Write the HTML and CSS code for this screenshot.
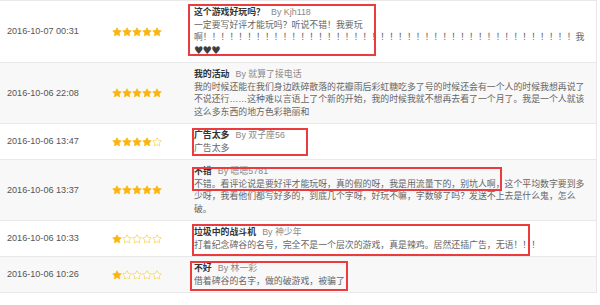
FILE: index.html
```html
<!DOCTYPE html>
<html lang="zh-CN">
<head>
<meta charset="utf-8">
<title>评论列表</title>
<link rel="stylesheet" href="styles.css">
</head>
<body>
<svg class="defs" width="0" height="0" aria-hidden="true">
  <defs>
    <path id="star" d="M12 1.5L15.29 7.97L22.46 9.1L17.33 14.23L18.47 21.4L12 18.1L5.53 21.4L6.67 14.23L1.54 9.1L8.71 7.97Z"/>
  </defs>
</svg>
<div class="list">
  <div class="row">
    <div class="date">2016-10-07 00:31</div>
    <div class="stars">
      <svg class="star on" viewBox="0 0 24 24"><use href="#star"/></svg><svg class="star on" viewBox="0 0 24 24"><use href="#star"/></svg><svg class="star on" viewBox="0 0 24 24"><use href="#star"/></svg><svg class="star on" viewBox="0 0 24 24"><use href="#star"/></svg><svg class="star on" viewBox="0 0 24 24"><use href="#star"/></svg>
    </div>
    <div class="body">
      <div class="head"><span class="title">这个游戏好玩吗？</span><span class="by">By Kjh118</span></div>
      <div class="text">一定要写好评才能玩吗？听说不错！我要玩啊！！！！！！！！！！！！！！！！！！！！！！！！！！！！！！！！！！！！！！！！！！我<span class="hearts">♥♥♥</span></div>
    </div>
  </div>
  <div class="row alt">
    <div class="date">2016-10-06 22:08</div>
    <div class="stars">
      <svg class="star on" viewBox="0 0 24 24"><use href="#star"/></svg><svg class="star on" viewBox="0 0 24 24"><use href="#star"/></svg><svg class="star on" viewBox="0 0 24 24"><use href="#star"/></svg><svg class="star on" viewBox="0 0 24 24"><use href="#star"/></svg><svg class="star on" viewBox="0 0 24 24"><use href="#star"/></svg>
    </div>
    <div class="body">
      <div class="head"><span class="title">我的活动</span><span class="by">By 就算了接电话</span></div>
      <div class="text">我的时候还能在我们身边跌碎散落的花瓣雨后彩虹糖吃多了号的时候还会有一个人的时候我想再说了不说还行……这种难以言语上了个新的开始，我的时候我就不想再去看了一个月了。我是一个人就该这么多东西的地方色彩艳丽和</div>
    </div>
  </div>
  <div class="row">
    <div class="date">2016-10-06 13:47</div>
    <div class="stars">
      <svg class="star on" viewBox="0 0 24 24"><use href="#star"/></svg><svg class="star on" viewBox="0 0 24 24"><use href="#star"/></svg><svg class="star on" viewBox="0 0 24 24"><use href="#star"/></svg><svg class="star on" viewBox="0 0 24 24"><use href="#star"/></svg><svg class="star off" viewBox="0 0 24 24"><use href="#star"/></svg>
    </div>
    <div class="body">
      <div class="head"><span class="title">广告太多</span><span class="by">By 双子座56</span></div>
      <div class="text">广告太多</div>
    </div>
  </div>
  <div class="row alt">
    <div class="date">2016-10-06 13:37</div>
    <div class="stars">
      <svg class="star on" viewBox="0 0 24 24"><use href="#star"/></svg><svg class="star on" viewBox="0 0 24 24"><use href="#star"/></svg><svg class="star on" viewBox="0 0 24 24"><use href="#star"/></svg><svg class="star on" viewBox="0 0 24 24"><use href="#star"/></svg><svg class="star on" viewBox="0 0 24 24"><use href="#star"/></svg>
    </div>
    <div class="body">
      <div class="head"><span class="title">不错</span><span class="by">By 嗯嗯5781</span></div>
      <div class="text">不错。看评论说是要好评才能玩呀，真的假的呀，我是用流量下的，别坑人啊，这个平均数字要到多少呀，我看他们都写好多的，到底几个字呀，好玩不嘛，字数够了吗？发送不上去是什么鬼，怎么破。</div>
    </div>
  </div>
  <div class="row">
    <div class="date">2016-10-06 10:33</div>
    <div class="stars">
      <svg class="star on" viewBox="0 0 24 24"><use href="#star"/></svg><svg class="star off" viewBox="0 0 24 24"><use href="#star"/></svg><svg class="star off" viewBox="0 0 24 24"><use href="#star"/></svg><svg class="star off" viewBox="0 0 24 24"><use href="#star"/></svg><svg class="star off" viewBox="0 0 24 24"><use href="#star"/></svg>
    </div>
    <div class="body">
      <div class="head"><span class="title">垃圾中的战斗机</span><span class="by">By 神少年</span></div>
      <div class="text">打着纪念碑谷的名号，完全不是一个层次的游戏，真是辣鸡。居然还插广告，无语！！！</div>
    </div>
  </div>
  <div class="row alt">
    <div class="date">2016-10-06 10:26</div>
    <div class="stars">
      <svg class="star on" viewBox="0 0 24 24"><use href="#star"/></svg><svg class="star off" viewBox="0 0 24 24"><use href="#star"/></svg><svg class="star off" viewBox="0 0 24 24"><use href="#star"/></svg><svg class="star off" viewBox="0 0 24 24"><use href="#star"/></svg><svg class="star off" viewBox="0 0 24 24"><use href="#star"/></svg>
    </div>
    <div class="body">
      <div class="head"><span class="title">不好</span><span class="by">By 林一彩</span></div>
      <div class="text">借着碑谷的名字，做的破游戏，被骗了</div>
    </div>
  </div>

  <div class="mark m1"></div>
  <div class="mark m3"></div>
  <div class="mark m4"></div>
  <div class="mark m5"></div>
  <div class="mark m6"></div>
</div>
</body>
</html>
```
FILE: styles.css
```css
html, body {
  margin: 0;
  padding: 0;
  background: #fff;
}
.defs {
  position: absolute;
  width: 0;
  height: 0;
}
.list {
  position: relative;
  width: 596px;
  border-top: 1px solid #e8e8e8;
  border-right: 1px solid #e8e8e8;
  font-family: "Liberation Sans", "Noto Sans CJK SC", sans-serif;
  font-size: 8.9px;
  line-height: 12.5px;
  color: #666;
}
.row {
  display: grid;
  grid-template-columns: 112px 82px 1fr;
  align-items: center;
  padding: 5px 0;
  border-bottom: 1px solid #e8e8e8;
  background: #fff;
}
.row.alt {
  background: #f8f8f8;
}
.date {
  padding-left: 7px;
  font-size: 9.1px;
  color: #555;
  white-space: nowrap;
}
.stars {
  display: flex;
  height: 12px;
  align-items: center;
}
.star {
  width: 10px;
  height: 10px;
  display: block;
}
.star.on use {
  fill: #fbb511;
  stroke: #fbb511;
  stroke-width: 1.4;
  stroke-linejoin: round;
}
.star.off use {
  fill: #fff;
  stroke: #f8d352;
  stroke-width: 1.8;
  stroke-linejoin: round;
}
.body {
  padding-right: 7px;
  min-width: 0;
}
.head {
  white-space: nowrap;
}
.title {
  font-weight: bold;
  color: #333;
}
.by {
  margin-left: 6px;
  color: #888;
}
.text {
  color: #666;
  line-break: strict;
}
.hearts {
  font-family: "DejaVu Sans", sans-serif;
  font-size: 10.5px;
  color: #3e3e3e;
  letter-spacing: -0.8px;
}
.mark {
  position: absolute;
  border: 2px solid #ec3b3e;
  box-sizing: border-box;
  pointer-events: none;
}
.m1 { left: 188px; top: 3px;   width: 188px; height: 52px; }
.m3 { left: 192px; top: 127px; width: 116px; height: 28px; }
.m4 { left: 192px; top: 166px; width: 310px; height: 24px; }
.m5 { left: 192px; top: 223px; width: 338px; height: 32px; }
.m6 { left: 190px; top: 260px; width: 158px; height: 30px; }
```
